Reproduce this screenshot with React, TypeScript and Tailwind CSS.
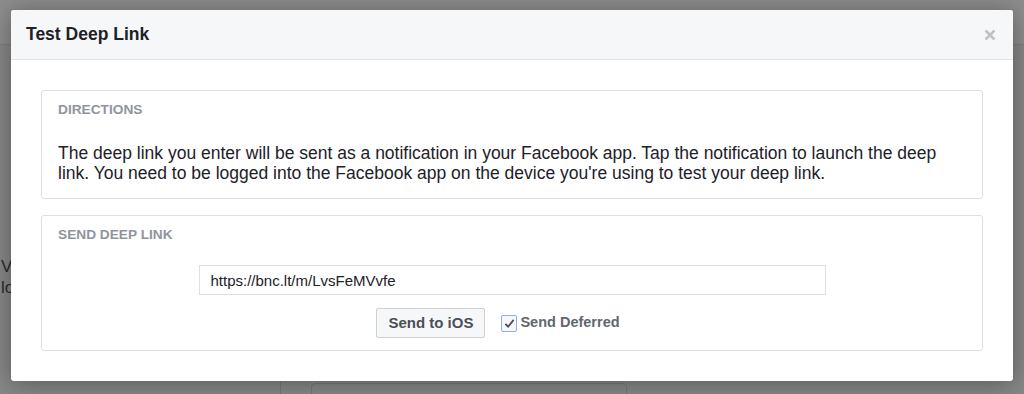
import { useState } from 'react';

export default function App() {
  const [url, setUrl] = useState('https://bnc.lt/m/LvsFeMVvfe');
  const [deferred, setDeferred] = useState(true);

  return (
    <div className="relative w-[1024px] h-[394px] overflow-hidden bg-[#878787] font-['Liberation_Sans',Arial,sans-serif]">
      {/* page underneath the overlay */}
      <div className="h-[45px] bg-[#8d8d8d] border-b border-[#7f7f7f]" />
      <div className="pl-[1px] pt-[211px] text-[17px] leading-[21px] text-[#2b2b2b]">
        <div>Vi</div>
        <div>lo</div>
      </div>
      <div className="absolute left-[200px] top-[360px] w-[81px] h-[40px] border-r border-[#777]" />
      <div className="absolute left-[311px] top-[383px] w-[316px] h-[20px] rounded-t-[4px] border border-[#777]" />

      {/* dialog */}
      <div className="absolute left-[11px] top-[10px] w-[1002px] bg-white rounded-[3px] shadow-[0_2px_24px_rgba(0,0,0,0.35)]">
        <div className="h-[50px] px-[15px] flex items-center justify-between bg-[#f6f7f9] border-b border-[#e5e5e5] rounded-t-[3px]">
          <h1 className="text-[17.5px] font-bold text-[#1d2129]">Test Deep Link</h1>
          <button className="w-[14px] h-[14px] flex items-center justify-center text-[#bec2c9] mr-[1px]">
            <svg viewBox="0 0 12 12" className="w-[12px] h-[12px]">
              <path d="M1.5 1.5 L10.5 10.5 M10.5 1.5 L1.5 10.5" stroke="currentColor" strokeWidth="2.6" />
            </svg>
          </button>
        </div>

        <div className="p-[30px] flex flex-col gap-[16px]">
          <section className="border border-[#dddfe2] rounded-[3px] px-[16px] pt-[10px] pb-[15px]">
            <h2 className="text-[13.7px] leading-[18px] font-bold text-[#90949c]">DIRECTIONS</h2>
            <p className="mt-[24px] text-[17.5px] leading-[20px] text-[#1d2129]">
              The deep link you enter will be sent as a notification in your Facebook app. Tap the notification to launch the deep link. You need to be logged into the Facebook app on the device you're using to test your deep link.
            </p>
          </section>

          <section className="border border-[#dddfe2] rounded-[3px] px-[16px] pt-[10px] pb-[12px]">
            <h2 className="text-[13.7px] leading-[18px] font-bold text-[#90949c]">SEND DEEP LINK</h2>
            <div className="mt-[21px] flex justify-center">
              <input
                value={url}
                onChange={(e) => setUrl(e.target.value)}
                className="w-[627px] h-[30px] px-[11px] border border-[#dddfe2] text-[15px] text-[#1d2129] outline-none"
              />
            </div>
            <div className="mt-[13px] flex justify-center items-center pr-[28px]">
              <button className="h-[30px] px-[11px] bg-[#f6f7f9] border border-[#ced0d4] rounded-[2px] text-[15px] font-bold text-[#4b4f56]">
                Send to iOS
              </button>
              <label className="ml-[16px] flex items-center gap-[3px] cursor-pointer">
                <span
                  onClick={() => setDeferred(!deferred)}
                  className="w-[16px] h-[17px] flex items-center justify-center border border-[#8fb0e6] rounded-[2px] bg-[#f5f7fb]"
                >
                  {deferred && (
                    <svg viewBox="0 0 12 12" className="w-[11px] h-[11px]">
                      <path d="M1.5 6.5 L4.5 9.5 L10.5 2" fill="none" stroke="#4b4f56" strokeWidth="2" />
                    </svg>
                  )}
                </span>
                <span className="text-[14.5px] font-bold text-[#606770]">Send Deferred</span>
              </label>
            </div>
          </section>
        </div>
      </div>
    </div>
  );
}
